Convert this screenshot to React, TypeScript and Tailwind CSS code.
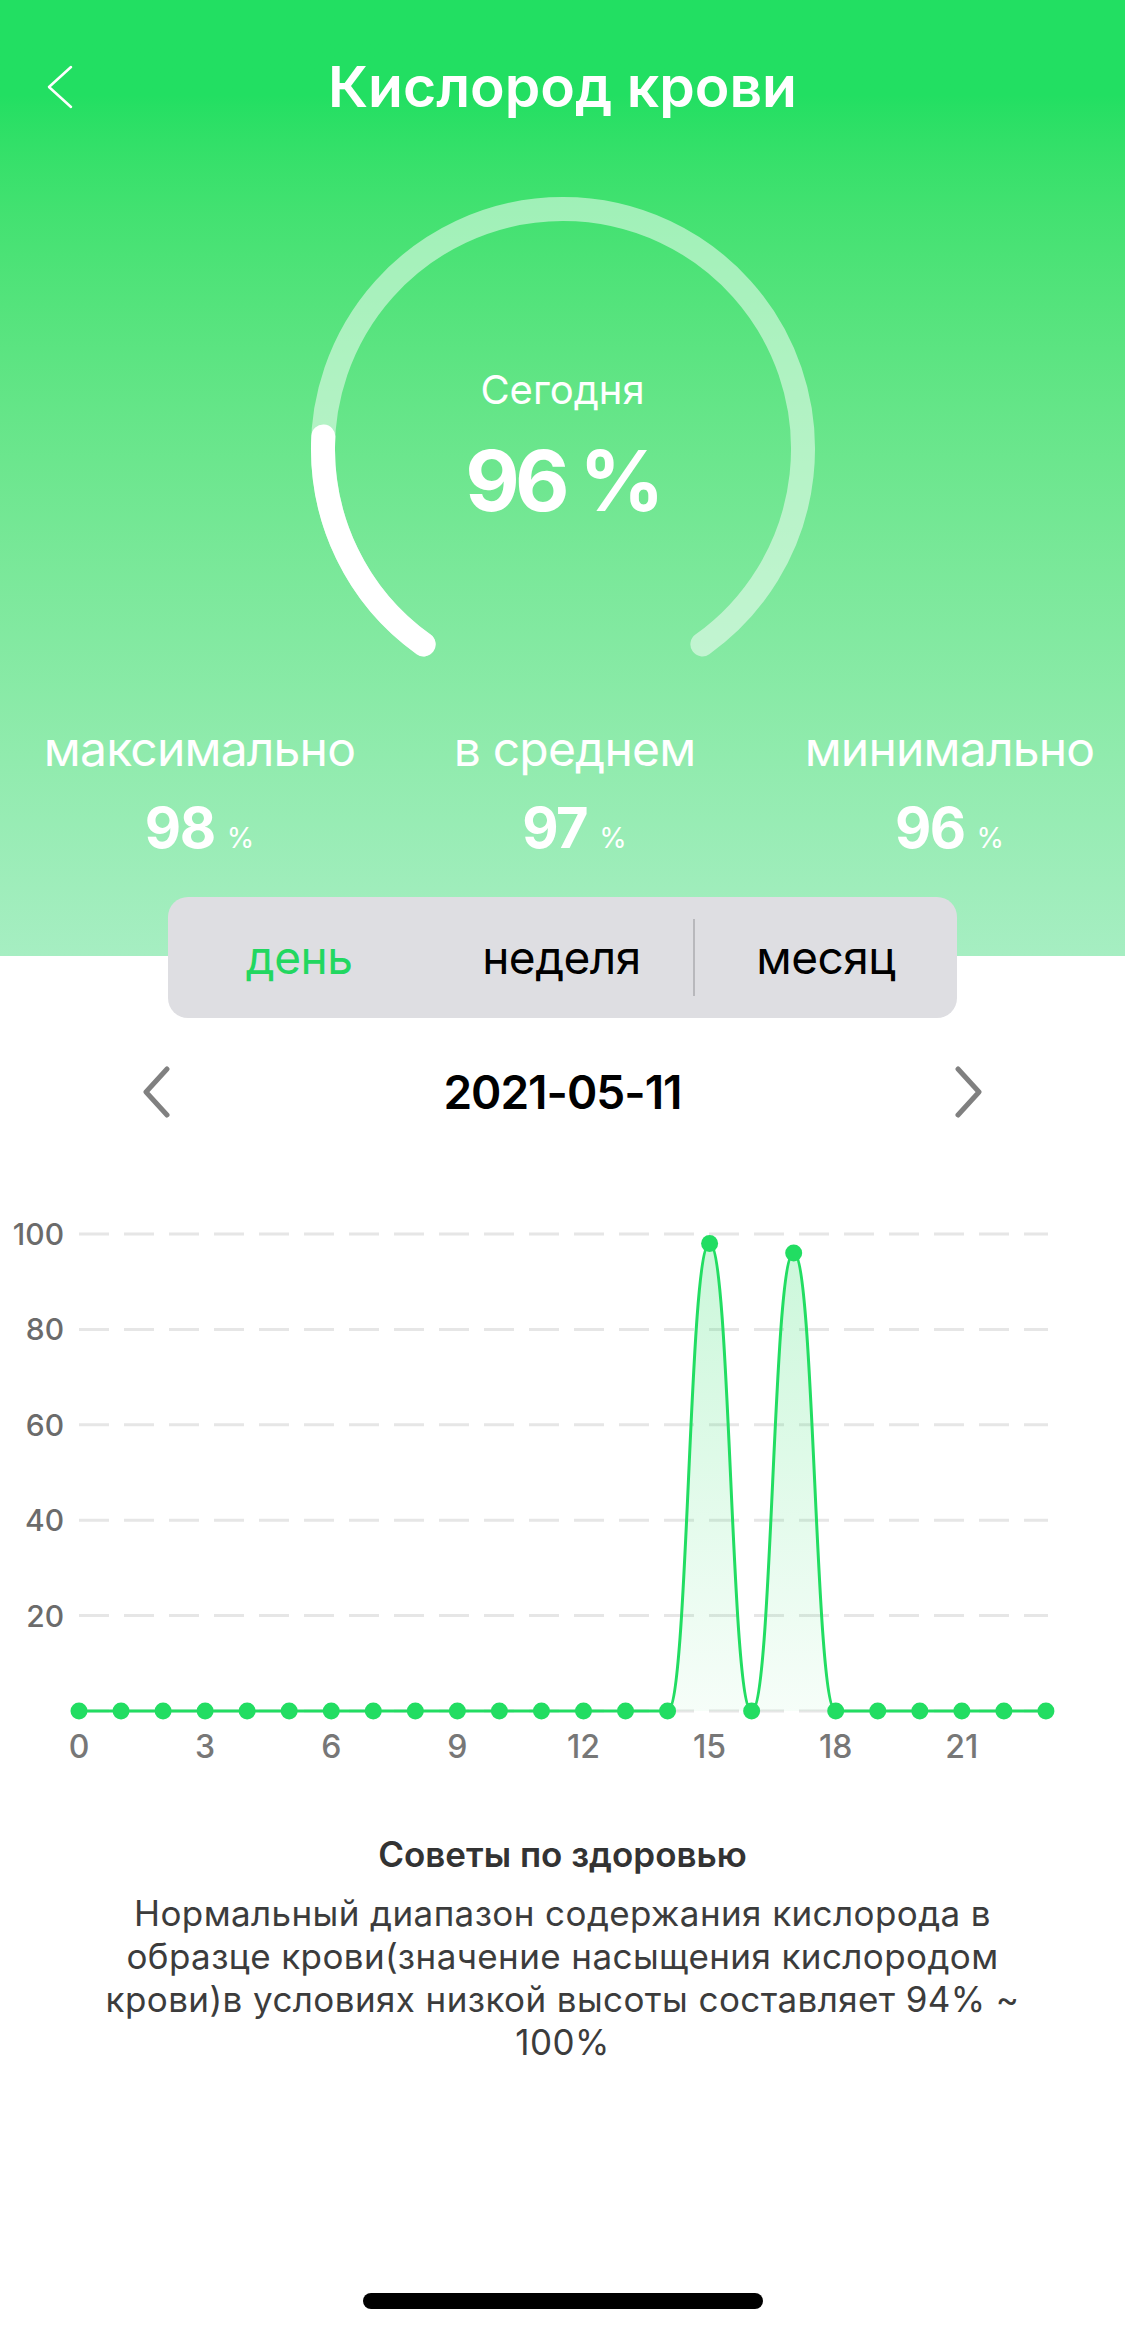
import React from 'react';

const GREEN = '#22dd62';

const values = [0, 0, 0, 0, 0, 0, 0, 0, 0, 0, 0, 0, 0, 0, 0, 98, 0, 96, 0, 0, 0, 0, 0, 0];

function polar(a: number, r = 240, c = 265) {
    const rad = (a * Math.PI) / 180;
    return [c + r * Math.cos(rad), c + r * Math.sin(rad)];
}

function arcPath(a0: number, a1: number) {
    const [x0, y0] = polar(a0);
    const [x1, y1] = polar(a1);
    const large = a1 - a0 > 180 ? 1 : 0;
    return `M${x0},${y0} A240,240 0 ${large} 1 ${x1},${y1}`;
}

function Gauge() {
    return (
        <div className="relative mx-auto mt-[50px] h-[530px] w-[530px]">
            <svg className="absolute inset-0" width="530" height="530" viewBox="0 0 530 530">
                <path d={arcPath(125.5, 414.5)} fill="none" stroke="rgba(255,255,255,0.5)" strokeWidth="24" strokeLinecap="round" />
                <path d={arcPath(125.5, 183)} fill="none" stroke="#ffffff" strokeWidth="24" strokeLinecap="round" />
            </svg>
            <div className="relative flex flex-col items-center pt-[182px] text-white">
                <div className="text-[40px] leading-[48px]">Сегодня</div>
                <div className="mt-[17px] text-[84px] leading-[100px] font-bold tracking-[-5px]">96 %</div>
            </div>
        </div>
    );
}

function Stat({ label, value }: { label: string; value: string }) {
    return (
        <div className="flex flex-col items-center text-white">
            <div className="text-[48px] leading-[58px] tracking-[-0.8px]">{label}</div>
            <div className="mt-[18px] flex items-baseline leading-[64px]">
                <span className="text-[56px] font-bold tracking-[-1.5px]">{value}</span>
                <span className="ml-[12px] text-[28px]">%</span>
            </div>
        </div>
    );
}

function Chevron({ dir }: { dir: 'left' | 'right' }) {
    return (
        <svg width="28" height="52" viewBox="0 0 28 52">
            <polyline
                points={dir === 'left' ? '24,3 3,26 24,49' : '4,3 25,26 4,49'}
                fill="none"
                stroke="#808080"
                strokeWidth="5"
                strokeLinecap="round"
                strokeLinejoin="round"
            />
        </svg>
    );
}

function Chart() {
    const x0 = 79;
    const step = 42.04;
    const base = 521;
    const k = 4.77;
    const px = values.map((_, i) => x0 + i * step);
    const py = values.map((v) => base - v * k);

    let line = `M${px[0]},${py[0]}`;
    for (let i = 1; i < values.length; i++) {
        const cx = (px[i - 1] + px[i]) / 2;
        line += ` C${cx},${py[i - 1]} ${cx},${py[i]} ${px[i]},${py[i]}`;
    }
    const area = `${line} L${px[px.length - 1]},${base} L${px[0]},${base} Z`;

    return (
        <svg width="1125" height="580" viewBox="0 0 1125 580" className="mt-[53px] block" style={{ fontFamily: 'Inter, sans-serif' }}>
            <defs>
                <linearGradient id="fillG" x1="0" y1="44" x2="0" y2={base} gradientUnits="userSpaceOnUse">
                    <stop offset="0" stopColor={GREEN} stopOpacity="0.24" />
                    <stop offset="1" stopColor={GREEN} stopOpacity="0.04" />
                </linearGradient>
            </defs>
            {[0, 20, 40, 60, 80, 100].map((v) => {
                const y = base - v * k;
                return (
                    <g key={v}>
                        <line x1="79" x2="1048" y1={y} y2={y} stroke="#e6e6e6" strokeWidth="3" strokeDasharray="30 15" />
                        {v > 0 && (
                            <text x="64" y={y + 11} textAnchor="end" fontSize="30" fontWeight="500" fill="#6b6b6b">
                                {v}
                            </text>
                        )}
                    </g>
                );
            })}
            <path d={area} fill="url(#fillG)" />
            <path d={line} fill="none" stroke={GREEN} strokeWidth="3" />
            {px.map((x, i) => (
                <circle key={i} cx={x} cy={py[i]} r="8.5" fill={GREEN} />
            ))}
            {[0, 3, 6, 9, 12, 15, 18, 21].map((h) => (
                <text key={h} x={px[h]} y="568" textAnchor="middle" fontSize="32" fontWeight="500" fill="#777777">
                    {h}
                </text>
            ))}
        </svg>
    );
}

export default function App() {
    return (
        <div className="flex h-[2325px] w-[1125px] flex-col overflow-hidden bg-white" style={{ fontFamily: 'Inter, "Noto Sans", sans-serif' }}>
            <header className="h-[956px] bg-linear-to-b from-[#22df62] from-10% to-[#a6eec2]">
                <div className="grid h-[134px] grid-cols-[1fr_auto_1fr] items-center pt-[40px]">
                    <div className="pl-[46px]">
                        <svg width="28" height="46" viewBox="0 0 28 46">
                            <polyline points="25,3 3,23 25,43" fill="none" stroke="#ffffff" strokeWidth="2.5" strokeLinecap="round" strokeLinejoin="round" />
                        </svg>
                    </div>
                    <h1 className="text-[57px] leading-[66px] font-semibold text-white">Кислород крови</h1>
                    <div />
                </div>
                <Gauge />
                <div className="mt-[6px] ml-[12px] grid w-[1125px] grid-cols-[375px_375px_375px]">
                    <Stat label="максимально" value="98" />
                    <Stat label="в среднем" value="97" />
                    <Stat label="минимально" value="96" />
                </div>
            </header>

            <div className="relative mx-auto -mt-[59px] grid h-[121px] w-[789px] grid-cols-[1fr_1fr_2px_1fr] items-center rounded-[20px] bg-[#dedee2] text-[46px] tracking-[-0.5px]">
                <div className="text-center text-[#22d760]">день</div>
                <div className="text-center text-black">неделя</div>
                <div className="h-[77px] w-[2px] bg-[#b8b8bc]" />
                <div className="text-center text-black">месяц</div>
            </div>

            <div className="mt-[29px] flex h-[90px] items-center justify-between px-[143px]">
                <Chevron dir="left" />
                <div className="text-[46px] leading-[56px] font-semibold tracking-[-1px] text-black">2021-05-11</div>
                <Chevron dir="right" />
            </div>

            <Chart />

            <section className="mt-[64px] flex flex-col items-center text-center">
                <h2 className="text-[35px] leading-[40px] font-semibold text-[#333333]">Советы по здоровью</h2>
                <p className="mt-[18px] text-[35px] leading-[43px] tracking-[0.4px] text-[#3c3c3c]">
                    Нормальный диапазон содержания кислорода в<br />
                    образце крови(значение насыщения кислородом
                    <br />
                    крови)в условиях низкой высоты составляет 94% ~<br />
                    100%
                </p>
            </section>

            <div className="mx-auto mt-auto mb-[16px] h-[16px] w-[400px] rounded-full bg-black" />
        </div>
    );
}
